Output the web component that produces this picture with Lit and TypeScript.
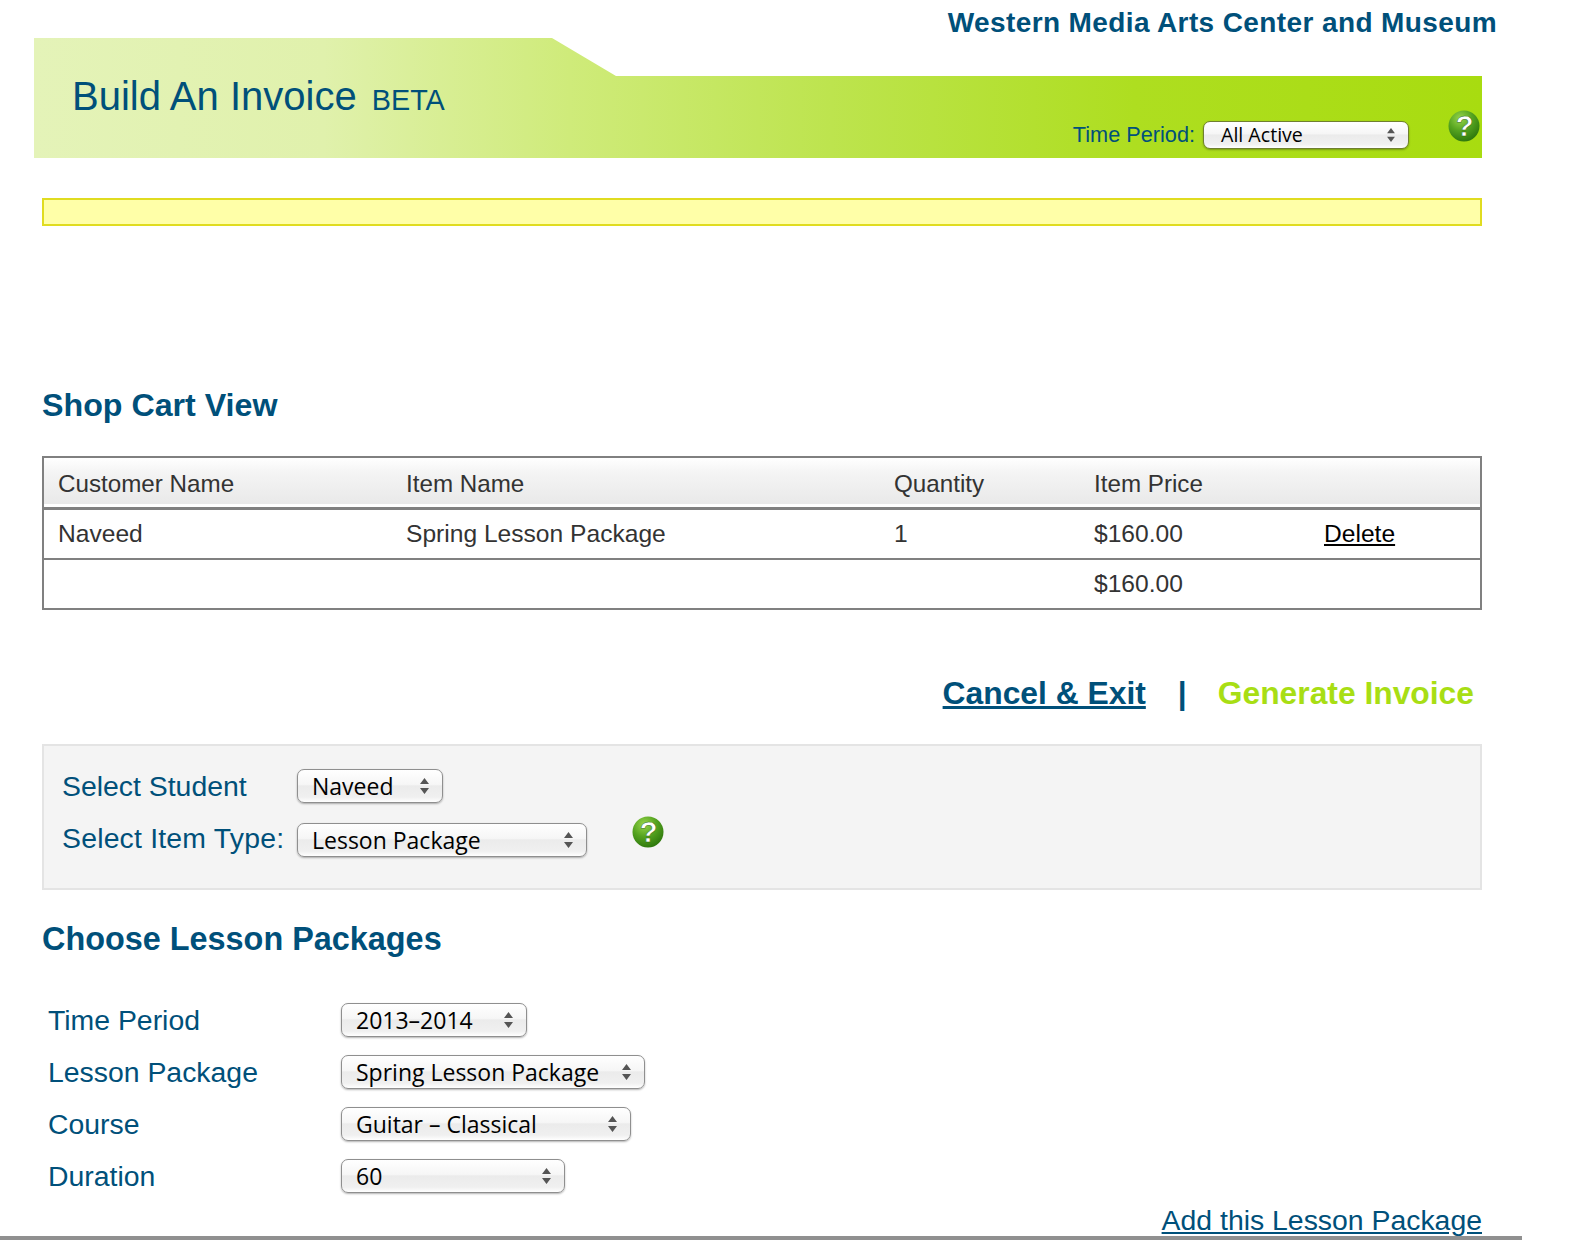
import { LitElement, html, css } from "lit";
import { customElement } from "lit/decorators.js";

let gid = 0;
const help = () => {
  const id = `h${gid++}`;
  return html`<span class="help" role="img" aria-label="Help">
    <svg viewBox="0 0 32 32" width="32" height="32">
      <defs><radialGradient id=${id} cx="38%" cy="26%" r="78%">
        <stop offset="0" stop-color="#97d64a"/><stop offset=".5" stop-color="#55a320"/><stop offset="1" stop-color="#2c760c"/>
      </radialGradient></defs>
      <circle cx="16" cy="16" r="15.5" fill="url(#${id})"/>
    </svg>
    <span class="q">?</span>
  </span>`;
};

const select = (label: string, width: number, cls = "") => html`<div class="sel ${cls}" style="width:${width}px">
  <span>${label}</span>
  <svg class="arrows" viewBox="0 0 9 16" width="9" height="16"><path d="M4.5 0 9 6H0zM4.5 16 0 10h9z" fill="#555"/></svg>
</div>`;

@customElement("app-root")
export class AppRoot extends LitElement {
  static styles = css`
    :host { display: block; width: 1584px; height: 1240px; overflow: hidden; background: #fff;
      font-family: "Liberation Sans", Arial, sans-serif; color: #00507a; }
    * { box-sizing: border-box; }
    .org { height: 38px; padding: 0 87px 0 0; text-align: right; font-weight: 700; font-size: 28px; letter-spacing: .39px; line-height: 46px; white-space: nowrap; }
    .banner { margin-left: 34px; width: 1448px; height: 120px; display: flex; align-items: flex-start;
      background: linear-gradient(90deg, #e4f3b8 0, #e0f1ac 20%, #cfeb7a 37%, #bde44e 55%, #aede20 76%, #a8dc10 100%);
      clip-path: polygon(0 0, 518px 0, 582px 38px, 100% 38px, 100% 100%, 0 100%); }
    .title { margin: 33px 0 0 38px; font-size: 40px; line-height: 50px; white-space: nowrap; flex: 1; }
    .title small { font-size: 28.8px; margin-left: 4px; }
    .tp { display: flex; align-items: flex-start; margin-top: 83px; }
    .tp label { font-size: 21.7px; line-height: 28px; margin-right: 8px; }
    .help { position: relative; display: inline-block; width: 32px; height: 32px; flex: none; }
    .help svg { display: block; }
    .q { position: absolute; inset: 0; text-align: center; font: 700 29px/32px "Liberation Sans", sans-serif; color: #fff;
      padding-left: 1px; -webkit-text-stroke: .5px #2b6a0a; }
    .banner .help { margin: 72px 2px 0 39px; }
    .notice { margin: 40px 0 0 42px; width: 1440px; height: 28px; border: 2px solid #e0dc20; background: #ffffa8; }
    h2 { margin: 0; font-size: 32.2px; font-weight: 700; line-height: 40px; }
    .shop { margin: 159px 0 0 42px; }
    table { margin: 31px 0 0 42px; width: 1440px; table-layout: fixed; border-collapse: separate; border-spacing: 0;
      border: 2px solid #808080; font-size: 24.6px; color: #333; }
    th, td { padding: 0 0 0 14px; text-align: left; font-weight: 400; height: 50px; border-bottom: 2px solid #808080; white-space: nowrap; }
    th { height: 52px; padding-top: 2px; font-size: 24.2px; border-bottom: 3px solid #808080; background: linear-gradient(#fff, #f4f4f4 30%, #e9e9e9 94%, #fff 94%); }
    tr:last-child td { border-bottom: 0; height: 48px; }
    td a { color: #000; text-decoration: underline; }
    .actions { display: flex; justify-content: flex-end; align-items: baseline; margin-top: 61px; padding-right: 110px;
      font-size: 31.8px; font-weight: 700; line-height: 44px; }
    .actions a { color: #00507a; text-decoration: underline; }
    .actions .sep { margin: 0 31px 0 32px; }
    .actions .gen { color: #a8de14; text-decoration: none; }
    .panel { margin: 29px 0 0 42px; width: 1440px; height: 146px; border: 2px solid #e4e4e4; background: #f4f4f4;
      padding: 23px 0 0 18px; }
    .row { display: flex; align-items: center; font-size: 28.4px; height: 34px; margin-bottom: 20px; white-space: nowrap; }
    .panel .lbl { width: 235px; }
    .panel .row + .row .lbl { letter-spacing: .2px; padding-bottom: 4px; }
    .panel .help { margin: -16px 0 0 45px; }
    .pack { margin: 29px 0 0 42px; font-size: 32.4px; }
    .fields { margin: 44px 0 0 48px; }
    .fields .row { margin-bottom: 18px; }
    .fields .lbl { width: 293px; }
    .sel { display: inline-flex; align-items: center; justify-content: space-between; height: 34px; padding: 0 13px 0 14px;
      border: 1px solid #8f8f8f; border-radius: 7px; color: #000; font-family: "Open Sans", sans-serif; font-size: 23px;
      background: linear-gradient(#fff, #f6f6f6 45%, #ebebeb 50%, #f0f0f0 85%, #fff);
      box-shadow: 0 1px 2px rgba(0,0,0,.3); flex: none; }
    .sel span { line-height: 32px; }
    .sel.small { height: 28px; font-size: 19.6px; padding: 0 13px 0 17px; border-color: #6f7f30; margin: 0; }
    .sel.small span { line-height: 28px; }
    .sel.small .arrows { width: 8px; height: 14px; }
    .add { display: flex; justify-content: flex-end; padding-right: 102px; font-size: 28.4px; line-height: 34px; margin-top: -8px; }
    .add a { color: #00507a; text-decoration: underline; }
    .rule { width: 1522px; height: 4px; background: #909090; position: relative; margin-top: -1px; }
  `;

  render() {
    return html`
      <div class="org">Western Media Arts Center and Museum</div>
      <header class="banner">
        <div class="title">Build An Invoice <small>BETA</small></div>
        <div class="tp"><label>Time Period:</label>${select("All Active", 206, "small")}</div>
        ${help()}
      </header>
      <div class="notice"></div>
      <h2 class="shop">Shop Cart View</h2>
      <table>
        <colgroup><col style="width:348px"/><col style="width:488px"/><col style="width:200px"/><col style="width:230px"/><col/></colgroup>
        <tr><th>Customer Name</th><th>Item Name</th><th>Quantity</th><th>Item Price</th><th></th></tr>
        <tr><td>Naveed</td><td>Spring Lesson Package</td><td>1</td><td>$160.00</td><td><a href="#">Delete</a></td></tr>
        <tr><td></td><td></td><td></td><td>$160.00</td><td></td></tr>
      </table>
      <div class="actions"><a href="#">Cancel &amp; Exit</a><span class="sep">|</span><a class="gen" href="#">Generate Invoice</a></div>
      <section class="panel">
        <div class="row"><span class="lbl">Select Student</span>${select("Naveed", 146)}</div>
        <div class="row"><span class="lbl">Select Item Type:</span>${select("Lesson Package", 290)}${help()}</div>
      </section>
      <h2 class="pack">Choose Lesson Packages</h2>
      <div class="fields">
        <div class="row"><span class="lbl">Time Period</span>${select("2013–2014", 186)}</div>
        <div class="row"><span class="lbl">Lesson Package</span>${select("Spring Lesson Package", 304)}</div>
        <div class="row"><span class="lbl">Course</span>${select("Guitar – Classical", 290)}</div>
        <div class="row"><span class="lbl">Duration</span>${select("60", 224)}</div>
      </div>
      <div class="add"><a href="#">Add this Lesson Package</a></div>
      <div class="rule"></div>
    `;
  }
}
